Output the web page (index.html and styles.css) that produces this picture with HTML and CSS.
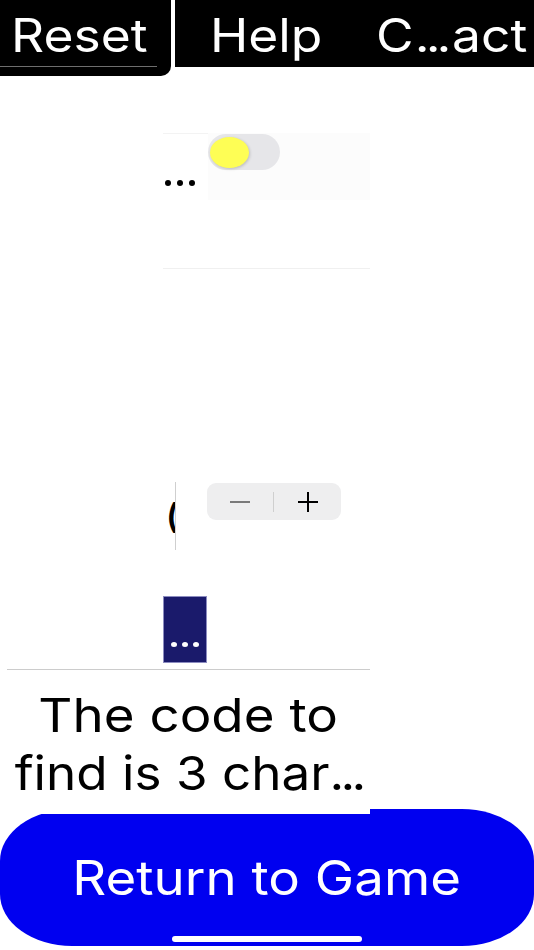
FILE: index.html
```html
<!DOCTYPE html>
<html>
<head>
<meta charset="utf-8">
<link rel="stylesheet" href="styles.css">
</head>
<body>
<div class="screen">
  <header class="topbar">
    <div class="tab-reset">
      <div class="tab-label"><span class="wide">Reset</span></div>
    </div>
    <nav class="nav">
      <span class="nav-item help wide">Help</span>
      <span class="nav-item contact wide">C<span class="dots-h">...</span>act</span>
    </nav>
  </header>

  <section class="column">
    <div class="toggle-row">
      <div class="toggle-label">
        <span class="dot"></span><span class="dot"></span><span class="dot"></span>
      </div>
      <div class="toggle-box">
        <div class="switch"><div class="knob"></div></div>
      </div>
    </div>
    <div class="rule"></div>

    <div class="stepper-row">
      <div class="stepper-label"><span class="paren">(</span></div>
      <div class="stepper">
        <span class="step minus"></span>
        <span class="step-sep"></span>
        <span class="step plus"></span>
      </div>
    </div>

    <div class="navy">
      <span class="wdot"></span><span class="wdot"></span><span class="wdot"></span>
    </div>
  </section>

  <section class="panel">
    <div class="panel-rule"></div>
    <p class="message"><span class="line">The code to</span><span class="line second">find is 3 char<span class="dots-m">...</span></span></p>
  </section>

  <div class="cta">
    <span class="cta-text">Return to Game</span>
    <span class="home-indicator"></span>
  </div>
</div>
</body>
</html>
```

FILE: styles.css
```css
html, body {
  margin: 0;
  padding: 0;
  background: #ffffff;
}

.screen {
  width: 534px;
  height: 950px;
  overflow: hidden;
  font-family: Inter, "Liberation Sans", Arial, sans-serif;
  display: flex;
  flex-direction: column;
}

.wide {
  display: inline-block;
  transform: scaleX(1.12);
  transform-origin: left center;
}

.dots-h {
  letter-spacing: -3.5px;
  margin-left: 1px;
  margin-right: 4px;
}

.dots-m {
  letter-spacing: -3.5px;
}

/* Top bar */
.topbar {
  display: flex;
  align-items: flex-start;
  height: 76px;
}

.tab-reset {
  width: 171px;
  height: 76px;
  background: #000;
  border-bottom-right-radius: 10px;
  flex: none;
}

.tab-label {
  width: 146px;
  height: 64px;
  padding-top: 2px;
  padding-left: 11px;
  border-bottom: 1px solid #6e6e6e;
  color: #fff;
  font-size: 46px;
  line-height: 66px;
  white-space: nowrap;
}

.nav {
  margin-left: 4px;
  flex: 1;
  height: 67px;
  background: #000;
  display: flex;
  align-items: flex-start;
  padding-top: 2px;
  box-sizing: border-box;
  color: #fff;
  font-size: 46px;
  line-height: 66px;
  white-space: nowrap;
}

.nav-item.help {
  margin-left: 35px;
}

.nav-item.contact {
  margin-left: 66px;
}

/* Middle column */
.column {
  margin-left: 163px;
  width: 207px;
  margin-top: 57px;
  display: flex;
  flex-direction: column;
}

.toggle-row {
  display: flex;
  height: 67px;
}

.toggle-label {
  width: 45px;
  border-top: 1px solid #f3f3f3;
  display: flex;
  gap: 6px;
  padding-top: 46px;
  padding-left: 2px;
  box-sizing: border-box;
}

.dot {
  width: 6px;
  height: 6px;
  border-radius: 50%;
  background: #000;
}

.toggle-box {
  flex: 1;
  background: #fcfcfc;
}

.switch {
  width: 72px;
  height: 36px;
  margin-top: 1px;
  border-radius: 18px;
  background: #e6e6e9;
  position: relative;
}

.knob {
  position: absolute;
  left: 2px;
  top: 3px;
  width: 39px;
  height: 31px;
  border-radius: 50%;
  background: #fefe55;
  box-shadow: 1px 1px 3px rgba(0,0,0,0.18);
}

.rule {
  margin-top: 68px;
  height: 1px;
  background: #f0f0f0;
}

.stepper-row {
  margin-top: 213px;
  height: 68px;
  display: flex;
  align-items: flex-start;
}

.stepper-label {
  width: 12px;
  height: 68px;
  border-right: 1px solid #cfcfcf;
  overflow: hidden;
  flex: none;
}

.paren {
  display: block;
  margin-left: 3px;
  margin-top: 14px;
  font-size: 34px;
  line-height: 40px;
  font-weight: 600;
  color: #000;
}

.stepper {
  margin-left: 31px;
  margin-top: 1px;
  width: 134px;
  height: 37px;
  border-radius: 9px;
  background: #eeeeef;
  display: flex;
  align-items: center;
}

.step {
  width: 66px;
  height: 37px;
  position: relative;
}

.step.minus::before,
.step.plus::before,
.step.plus::after {
  content: "";
  position: absolute;
  background: #000;
}

.step.minus::before {
  left: 23px;
  top: 18px;
  width: 20px;
  height: 1.5px;
  background: #7a7a7a;
}

.step.plus::before {
  left: 24px;
  top: 18px;
  width: 20px;
  height: 1.5px;
}

.step.plus::after {
  left: 33px;
  top: 9px;
  width: 1.5px;
  height: 20px;
}

.step-sep {
  width: 1px;
  height: 20px;
  background: #cfcfcf;
}

.navy {
  margin-top: 46px;
  width: 44px;
  height: 67px;
  box-sizing: border-box;
  background: #1a1a6b;
  border: 1px solid #8c8cc0;
  display: flex;
  align-items: flex-end;
  justify-content: center;
  gap: 5px;
  padding-bottom: 15px;
}

.wdot {
  width: 6px;
  height: 5px;
  border-radius: 50%;
  background: #fff;
}

/* Message panel */
.panel {
  width: 370px;
  background: #fff;
  position: relative;
  z-index: 1;
  margin-top: 6px;
  margin-bottom: -5px;
  padding-bottom: 12px;
}

.panel-rule {
  margin-left: 7px;
  height: 1px;
  background: #cccccc;
}

.message {
  margin: 0;
  padding-top: 16px;
  padding-left: 7px;
  display: flex;
  flex-direction: column;
  align-items: center;
  font-size: 47px;
  line-height: 58px;
  color: #000;
  white-space: nowrap;
}

.message .line {
  display: block;
  transform: scaleX(1.125);
}

.message .line.second {
  transform: scaleX(1.09);
}

/* Call to action */
.cta {
  position: relative;
  width: 534px;
  height: 137px;
  background: #0000f0;
  border-radius: 72px / 52px;
  display: flex;
  align-items: center;
  justify-content: center;
  flex: none;
}

.cta-text {
  display: inline-block;
  color: #fff;
  font-size: 48px;
  line-height: 58px;
  transform: scaleX(1.1);
}

.home-indicator {
  position: absolute;
  left: 172px;
  bottom: 4px;
  width: 190px;
  height: 6px;
  border-radius: 3px;
  background: #fff;
}
```
